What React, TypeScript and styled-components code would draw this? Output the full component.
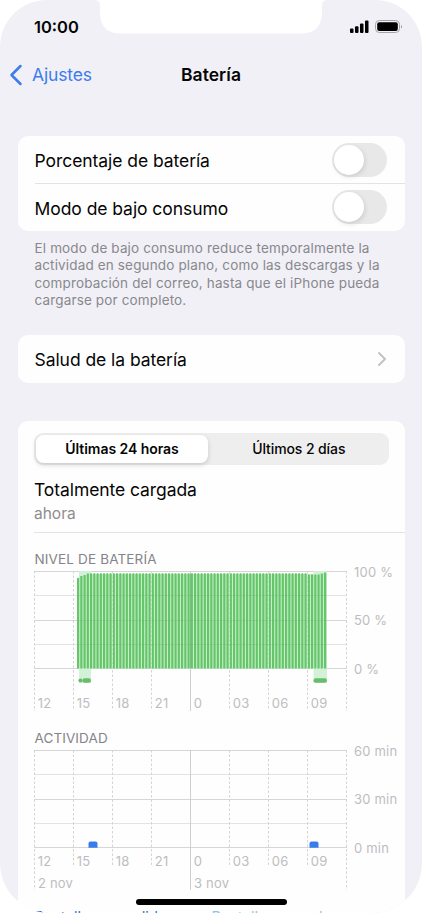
import React from "react";
import styled, { createGlobalStyle } from "styled-components";

const GlobalStyle = createGlobalStyle`
  * { box-sizing: border-box; }
  html, body { margin: 0; padding: 0; background: #fff; }
  body { font-family: Inter, "Liberation Sans", sans-serif; overflow: hidden; }
`;

const Screen = styled.main`
  position: relative;
  width: 422px;
  height: 913px;
  overflow: hidden;
  border-radius: 47px 47px 50px 50px;
  background: #f1f0f6;
  color: #050505;
`;

const StatusBar = styled.header`
  display: flex;
  align-items: flex-start;
  justify-content: space-between;
  height: 50px;
`;

const Clock = styled.time`
  width: 100px;
  padding: 17px 0 0 34px;
  font-size: 16.5px;
  font-weight: 600;
  line-height: 20px;
  letter-spacing: 0;
  white-space: nowrap;
`;

const StatusIcons = styled.svg`
  width: 100px;
  height: 50px;
`;

const Notch = styled.svg`
  width: 232px;
  height: 34px;
  margin: 0 -5px;
`;

const NavBar = styled.nav`
  display: grid;
  grid-template-columns: 1fr auto 1fr;
  align-items: center;
  height: 49px;
  margin-bottom: 1px;
`;

const BackLink = styled.a`
  display: flex;
  align-items: center;
  gap: 9px;
  padding-left: 9px;
  color: #3d7cee;
  font-size: 17.5px;
  letter-spacing: -0.15px;
`;

const Title = styled.h1`
  margin: 0;
  font-size: 17.5px;
  font-weight: 600;
  letter-spacing: 0.05px;
`;

const Content = styled.div`
  padding: 36px 17px 0 17.5px;
`;

const Card = styled.section`
  border-radius: 10px;
  background: #fefefe;
`;

const Row = styled.div`
  display: flex;
  align-items: center;
  justify-content: space-between;
  height: 47.5px;
  margin-left: 17px;
  padding-right: 18px;

  & + & {
    height: 48.5px;
    margin-top: -1px;
    border-top: 1px solid #e3e3e5;
  }
`;

const RowLabel = styled.span`
  padding-top: 1.5px;
  font-size: 17.5px;
  letter-spacing: -0.06px;
`;

const Switch = styled.button`
  display: flex;
  align-items: center;
  width: 55px;
  height: 34px;
  padding: 2px;
  border: 0;
  border-radius: 17px;
  background: #e8e8e9;
`;

const Thumb = styled.span`
  width: 30px;
  height: 30px;
  border-radius: 50%;
  background: #fff;
  box-shadow: 1px 2px 5px rgba(0, 0, 0, 0.12);
`;

const Footnote = styled.p`
  height: 104px;
  margin: 0;
  padding: 9px 0 0 17px;
  color: #88888d;
  font-size: 13.5px;
  line-height: 17.3px;
  letter-spacing: 0.15px;
  white-space: nowrap;
`;

const HealthCard = styled(Card)`
  margin-bottom: 38px;
`;

const UsageCard = styled(Card)`
  height: 520px;
  padding-top: 12px;
`;

const Segmented = styled.div`
  display: grid;
  grid-template-columns: 172px 1fr;
  width: 354.5px;
  height: 32px;
  margin-left: 16.5px;
  padding: 2px;
  border-radius: 9px;
  background: #eeeeef;
`;

const Segment = styled.button<{ $active?: boolean }>`
  padding: 0 0 0 ${(p) => (p.$active ? "0" : "3px")};
  border: 0;
  border-radius: 7.5px;
  background: ${(p) => (p.$active ? "#fff" : "transparent")};
  box-shadow: ${(p) => (p.$active ? "0 2px 5px rgba(0,0,0,.16)" : "none")};
  color: #050505;
  font-family: inherit;
  font-size: 14px;
  font-weight: ${(p) => (p.$active ? 600 : 500)};
  letter-spacing: ${(p) => (p.$active ? "-0.05px" : "-0.1px")};
`;

const ChargeState = styled.div`
  height: 68px;
  margin-left: 16.5px;
  padding-top: 13px;
  border-bottom: 1px solid #e3e3e5;
`;

const ChargeTitle = styled.div`
  font-size: 17.5px;
  line-height: 24px;
  letter-spacing: -0.08px;
`;

const ChargeTime = styled.div`
  color: #8d8d91;
  font-size: 15.5px;
  line-height: 24px;
`;

const ChartHeading = styled.h2<{ $gap: number; $spacing: string }>`
  height: 20px;
  margin: ${(p) => p.$gap}px 0 2px 17px;
  color: #858589;
  font-size: 13.5px;
  font-weight: 400;
  line-height: 20px;
  letter-spacing: ${(p) => p.$spacing};
`;

const Chart = styled.svg`
  display: block;
  margin-left: 16.5px;
  overflow: visible;

  text {
    fill: #bdbdbf;
    font-size: 13px;
    letter-spacing: 0.2px;
  }
`;

const Legend = styled.div`
  display: grid;
  grid-template-columns: 177px 1fr;
  margin: 16px 0 0 17px;
  font-size: 14.5px;
  line-height: 20px;
  letter-spacing: 0.1px;
`;

const LegendItem = styled.span<{ $color: string }>`
  color: ${(p) => p.$color};
`;

const HomeIndicator = styled.div`
  position: absolute;
  left: 136px;
  bottom: 8.5px;
  width: 150.5px;
  height: 5.5px;
  border-radius: 3px;
  background: #000;
`;

const HOURS = ["12", "15", "18", "21", "0", "03", "06", "09"];
const COLUMN = 39;
const GRID_ROWS = [0, 24, 49, 73, 97];
const BAR_STEP = 3.25;
const BAR_COUNT = 77;

function barTop(i: number) {
  const first = [7, 5, 4, 2.5];
  if (i < 4) return first[i];
  if (i >= 71) return [3.5, 3.5, 3.5, 3.5, 2.5, 1.5][i - 71];
  return 2.3;
}

function Grid({ tail, dayTail = tail }: { tail: number; dayTail?: number }) {
  return (
    <g>
      {GRID_ROWS.map((y, i) => (
        <path
          key={y}
          d={`M0 ${y + 0.5}H313`}
          stroke={i % 2 ? "#e3e3e4" : "#d6d6d7"}
          strokeWidth={1}
        />
      ))}
      {[...HOURS, ""].map((hour, i) => (
        <path
          key={i}
          d={`M${i * COLUMN + 0.5} 0V${i % 4 === 0 ? dayTail : tail}`}
          stroke={hour === "0" ? "#cfcfd1" : "#d4d4d6"}
          strokeDasharray={hour === "0" ? undefined : "2.5 2"}
        />
      ))}
    </g>
  );
}

function HourLabels({ y }: { y: number }) {
  return (
    <>
      {HOURS.map((hour, i) => (
        <text key={hour} x={i * COLUMN + 3.8} y={y}>
          {hour}
        </text>
      ))}
    </>
  );
}

function LevelChart() {
  return (
    <Chart width="371" height="140" viewBox="0 0 371 140">
      <Grid tail={139} dayTail={140} />
      <path d="M45 0H57V112H45ZM279.5 0H293V112H279.5Z" fill="#d3f1d7" />
      <path d="M43 7L53 3H293V97.5H43Z" fill="#c4efc7" />
      {Array.from({ length: BAR_COUNT }, (_, i) => {
        const top = barTop(i);
        return (
          <rect
            key={i}
            x={COLUMN + 4 + i * BAR_STEP}
            y={top}
            width="2.15"
            height={97.5 - top}
            rx="0.6"
            fill="#66c56b"
          />
        );
      })}
      {[2, 3, 5, 6, 7].map((i) => (
        <path
          key={i}
          d={`M${i * COLUMN + 0.5} 3V97`}
          stroke="#d5efd6"
          strokeDasharray="2.5 2"
          opacity="0.75"
        />
      ))}
      <path d="M156.5 3V97" stroke="#82bd85" />
      <path d="M43 24.5H293M43 49.5H293M43 73.5H293" stroke="#6baa70" opacity="0.25" />
      <circle cx="46.5" cy="109.5" r="2.1" fill="#68bd6b" />
      <rect x="48.5" y="107.2" width="8.5" height="4.5" rx="2.2" fill="#68bd6b" />
      <rect x="279.5" y="107.2" width="13.5" height="4.5" rx="2.2" fill="#68bd6b" />
      <text x="320" y="5.5">100 %</text>
      <text x="320" y="54">50 %</text>
      <text x="320" y="102.5">0 %</text>
      <HourLabels y={137} />
    </Chart>
  );
}

function ActivityChart() {
  return (
    <Chart width="371" height="141" viewBox="0 0 371 141">
      <Grid tail={117} dayTail={140} />
      <path d="M54.5 97.8V93.4Q54.5 91.4 56.5 91.4H61.5Q63.5 91.4 63.5 93.4V97.8Z" fill="#397bea" />
      <path d="M275.5 97.8V93.4Q275.5 91.4 277.5 91.4H282.5Q284.5 91.4 284.5 93.4V97.8Z" fill="#397bea" />
      <text x="320" y="5.5">60 min</text>
      <text x="320" y="54">30 min</text>
      <text x="320" y="103">0 min</text>
      <HourLabels y={116} />
      <text x="4" y="138">2 nov</text>
      <text x="160" y="138">3 nov</text>
    </Chart>
  );
}

export default function App() {
  return (
    <>
      <GlobalStyle />
      <Screen>
        <StatusBar>
          <Clock>10:00</Clock>
          <Notch viewBox="0 0 232 34">
            <path
              d="M0 0Q5 0 5 6V12C5 26 12 33.5 25 33.5H207C220 33.5 227 26 227 12V6Q227 0 232 0Z"
              fill="#fff"
            />
          </Notch>
          <StatusIcons viewBox="0 0 100 50">
            <rect x="28" y="28.5" width="3.5" height="4.5" rx="1" />
            <rect x="33" y="26.2" width="3.5" height="6.8" rx="1" />
            <rect x="38" y="23.4" width="3.5" height="9.6" rx="1" />
            <rect x="43" y="20.5" width="3.5" height="12.5" rx="1" />
            <rect x="53.5" y="20.5" width="24" height="12" rx="3.8" fill="none" stroke="#a5a5a8" />
            <rect x="55.2" y="22.2" width="20.6" height="8.8" rx="2" />
            <path d="M79 24.5Q80.7 26.5 79 28.5Z" fill="#8f8f92" />
          </StatusIcons>
        </StatusBar>

        <NavBar>
          <BackLink>
            <svg width="14" height="22" viewBox="0 0 14 22" fill="none">
              <path
                d="M11.5 2L2.5 11L11.5 20"
                stroke="#3d7cee"
                strokeWidth="2.5"
                strokeLinecap="round"
                strokeLinejoin="round"
              />
            </svg>
            Ajustes
          </BackLink>
          <Title>Batería</Title>
        </NavBar>

        <Content>
          <Card>
            <Row>
              <RowLabel>Porcentaje de batería</RowLabel>
              <Switch aria-label="Porcentaje de batería">
                <Thumb />
              </Switch>
            </Row>
            <Row>
              <RowLabel>Modo de bajo consumo</RowLabel>
              <Switch aria-label="Modo de bajo consumo">
                <Thumb />
              </Switch>
            </Row>
          </Card>
          <Footnote>
            El modo de bajo consumo reduce temporalmente la
            <br />
            actividad en segundo plano, como las descargas y la
            <br />
            comprobación del correo, hasta que el iPhone pueda
            <br />
            cargarse por completo.
          </Footnote>

          <HealthCard>
            <Row>
              <RowLabel>Salud de la batería</RowLabel>
              <svg width="10" height="16" viewBox="0 0 10 16" fill="none">
                <path d="M2 2L8 8L2 14" stroke="#c3c3c6" strokeWidth="2" strokeLinecap="round" />
              </svg>
            </Row>
          </HealthCard>

          <UsageCard>
            <Segmented>
              <Segment $active>Últimas 24 horas</Segment>
              <Segment>Últimos 2 días</Segment>
            </Segmented>
            <ChargeState>
              <ChargeTitle>Totalmente cargada</ChargeTitle>
              <ChargeTime>ahora</ChargeTime>
            </ChargeState>
            <ChartHeading $gap={16} $spacing="0.15px">
              NIVEL DE BATERÍA
            </ChartHeading>
            <LevelChart />
            <ChartHeading $gap={17} $spacing="0.1px">
              ACTIVIDAD
            </ChartHeading>
            <ActivityChart />
            <Legend>
              <LegendItem $color="#2f72dc">Pantalla encendida</LegendItem>
              <LegendItem $color="#86c8ef">Pantalla apagada</LegendItem>
            </Legend>
          </UsageCard>
        </Content>
        <HomeIndicator />
      </Screen>
    </>
  );
}
